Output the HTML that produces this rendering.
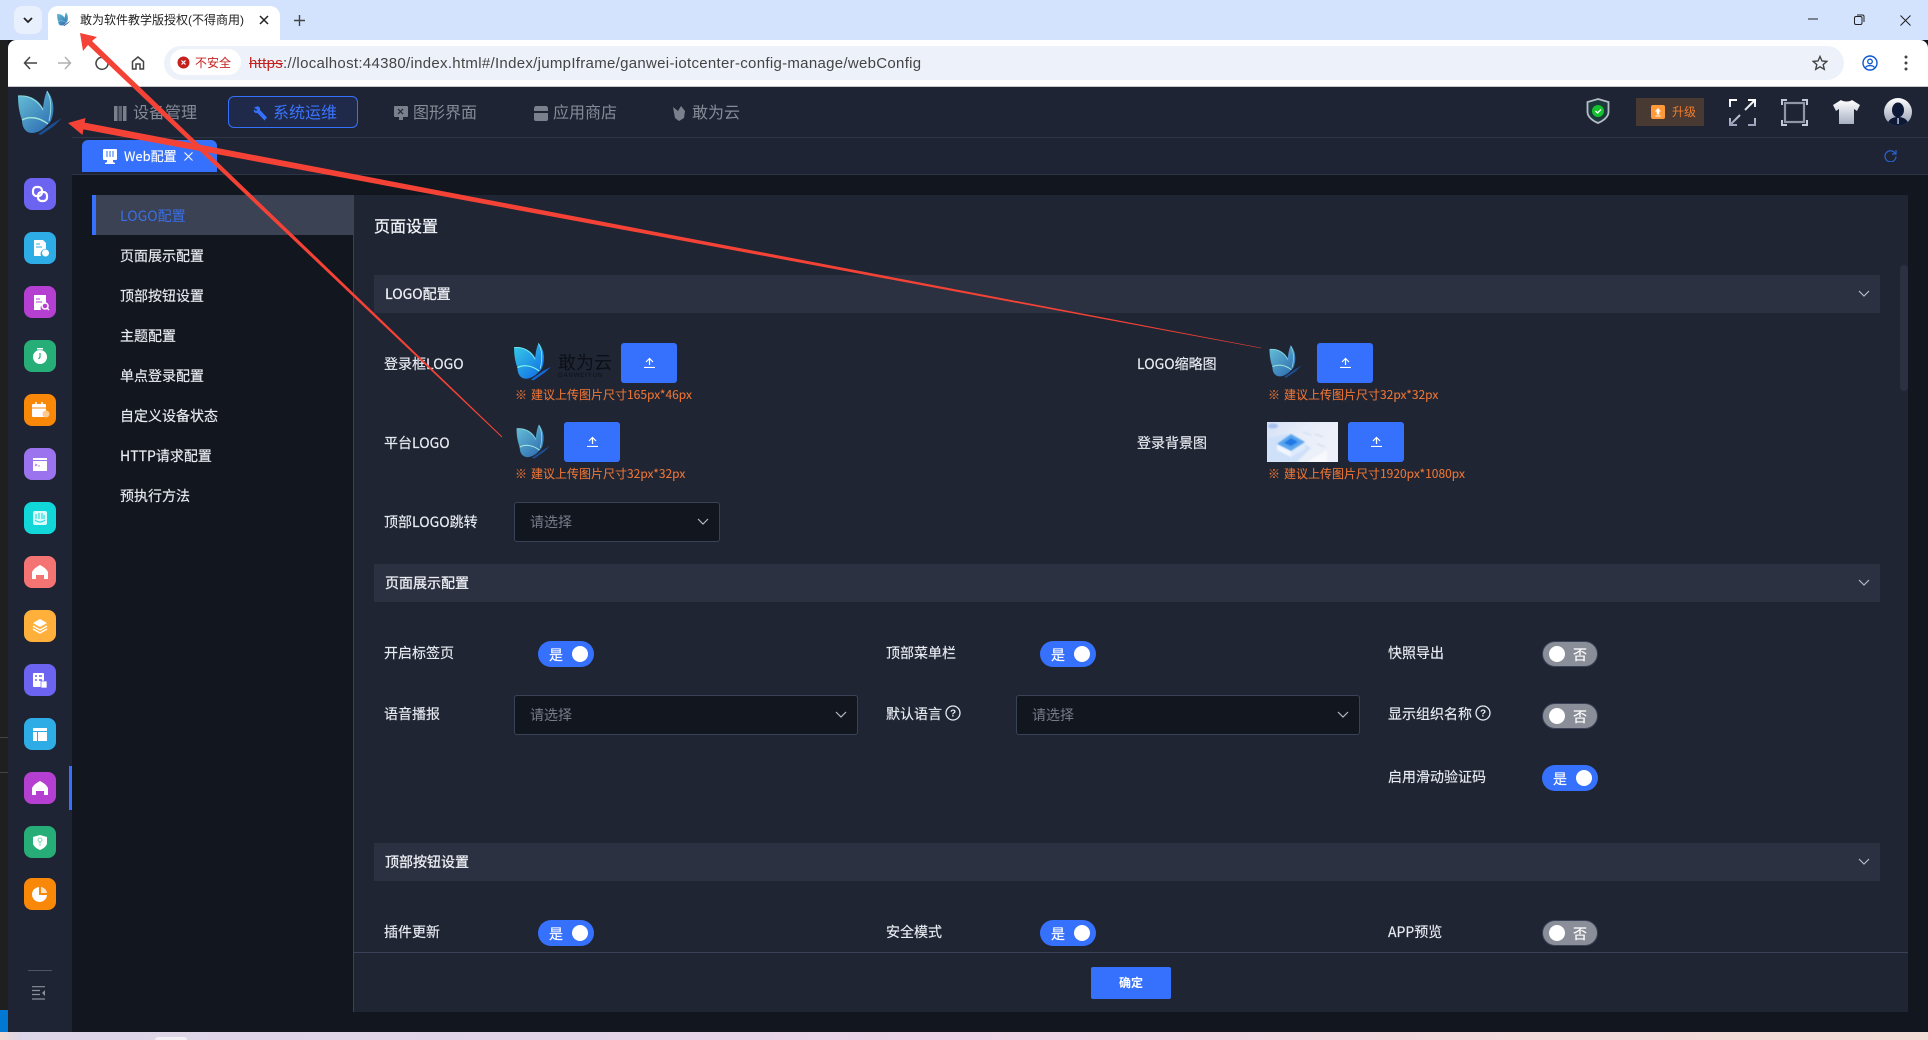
<!DOCTYPE html>
<html lang="zh"><head><meta charset="utf-8"><title>敢为软件教学版授权(不得商用)</title>
<style>
*{box-sizing:border-box}
html,body{margin:0;padding:0;width:1928px;height:1040px;overflow:hidden;background:#12161f;font-family:"Liberation Sans","Noto Sans CJK SC",sans-serif}
.a{position:absolute}
.t{position:absolute;white-space:nowrap;line-height:20px;height:20px;font-size:14px;color:#e8ebf1;-webkit-text-stroke:.15px #e8ebf1}
.n{font-family:"Noto Sans CJK SC","Liberation Sans",sans-serif}
.nav{font-size:16px;color:#858b97;-webkit-text-stroke:0}
.hint{font-size:12px;color:#ea7436;-webkit-text-stroke:.1px #ea7436}
.chrome{-webkit-text-stroke:0}
.sw{position:absolute;width:56px;height:26px;border-radius:13px;color:#fff;font-size:14px;line-height:26px}
.sw.on{background:#3671fd}
.sw.off{background:#8a8e98;border:1px solid #3a4258}
.sw i{position:absolute;top:5px;width:16px;height:16px;border-radius:50%;background:#fff}
.sw.on i{right:6px}.sw.off i{left:6px;top:4px}
.sw b{position:absolute;font-weight:400;top:1px;-webkit-text-stroke:.15px #fff}
.sw.on b{left:11px}.sw.off b{right:10px;top:0}
.sel{position:absolute;height:40px;background:#12161f;border:1px solid #3a4258;border-radius:3px;color:#767c8a;font-size:14px;line-height:38px;padding-left:15px}
.sel svg{position:absolute;right:10px;top:15px}
.sec{position:absolute;left:374px;width:1506px;background:#2b3140;color:#eceef3;font-size:14px;font-family:"Noto Sans CJK SC","Liberation Sans",sans-serif;-webkit-text-stroke:.3px #eceef3;padding-left:11px}
.sec svg{position:absolute;left:1484px;top:50%;margin-top:-4px}
.up{position:absolute;width:56px;height:40px;border-radius:3px;background:#3671fd}
.up svg{position:absolute;left:23px;top:14px}
.ic{position:absolute;left:24px;width:32px;height:32px;border-radius:8px}
.ic svg{position:absolute;left:0;top:0}
</style></head><body>

<svg width="0" height="0" style="position:absolute">
<defs>
<linearGradient id="g1" x1="0" y1="0" x2="0.8" y2="1"><stop offset="0" stop-color="#68c2d8"/><stop offset="1" stop-color="#2f6eb2"/></linearGradient>
<linearGradient id="h1" x1="0" y1="0" x2="0.8" y2="1"><stop offset="0" stop-color="#38cfe6"/><stop offset="1" stop-color="#1270e6"/></linearGradient>
<symbol id="bf" viewBox="0 0 64 52">
<path d="M6 10C16 8 26 13 31 22C32 14 33 9 35 5C41 11 43 22 40 32C39 35 38 37 36 38C32 43 26 47 20 47C14 47 10 42 10 34C7 26 6 18 6 10Z" fill="url(#g1)"/>
<path d="M6 10C16 9 26 14 31 24" fill="none" stroke="#8fdcdc" stroke-width="1"/>
<path d="M35 5C39 12 40 22 37 35" fill="none" stroke="#8fdcdc" stroke-width="1"/>
<path d="M10 34C17 30 27 31 36 38" fill="none" stroke="#a0e6dc" stroke-width="1.400"/>
<path d="M26 48L40 38L50 32L42 40L29 49Z" fill="#1c4f90"/>
</symbol>
<symbol id="bf2" viewBox="0 0 64 52">
<path d="M6 10C16 8 26 13 31 22C32 14 33 9 35 5C41 11 43 22 40 32C39 35 38 37 36 38C32 43 26 47 20 47C14 47 10 42 10 34C7 26 6 18 6 10Z" fill="url(#h1)"/>
<path d="M6 10C16 9 26 14 31 24" fill="none" stroke="#7cf0e8" stroke-width="1"/>
<path d="M35 5C39 12 40 22 37 35" fill="none" stroke="#7cf0e8" stroke-width="1"/>
<path d="M10 34C17 30 27 31 36 38" fill="none" stroke="#7cf0e8" stroke-width="1.400"/>
<path d="M26 48L40 38L50 33L42 40L29 49Z" fill="#1468d8"/>
</symbol>
<symbol id="up" viewBox="0 0 11 11"><path d="M5.5 8V1.5M2 5L5.5 1.5L9 5" fill="none" stroke="#fff" stroke-width="1.2"/><path d="M0 10.5H11" stroke="#fff" stroke-width="1.2"/></symbol>
<symbol id="ch" viewBox="0 0 12 7"><path d="M1 1L6 6L11 1" fill="none" stroke="#b4bac6" stroke-width="1.2"/></symbol>
</defs></svg>

<!-- browser chrome -->
<div class="a" style="left:0;top:0;width:1928px;height:40px;background:#d3e3fd"></div>
<div class="a" style="left:0;top:40px;width:8px;height:992px;background:#1f1f1f"></div>
<div class="a" style="left:8px;top:40px;width:1920px;height:46px;background:#fff;border-radius:8px 8px 0 0"></div>
<div class="a" style="left:8px;top:86px;width:1920px;height:1px;background:#c9c9c9"></div>
<div class="a" style="left:14px;top:6px;width:28px;height:28px;border-radius:8px;background:#e9f0fd"></div>
<svg class="a" style="left:23px;top:17px" width="10" height="7"><path d="M1 1L5 5L9 1" fill="none" stroke="#222" stroke-width="1.8"/></svg>
<div class="a" style="left:48px;top:6px;width:232px;height:36px;background:#fff;border-radius:10px 10px 0 0"></div>
<svg class="a" style="left:55px;top:11px" width="20" height="16"><use href="#bf"/></svg>
<div class="t chrome" style="left:80px;top:10px;font-size:12px;color:#1f1f1f">敢为软件教学版授权(不得商用)</div>
<svg class="a" style="left:259px;top:15px" width="10" height="10"><path d="M1 1L9 9M9 1L1 9" stroke="#222" stroke-width="1.5"/></svg>
<svg class="a" style="left:294px;top:15px" width="11" height="11"><path d="M5.5 0V11M0 5.5H11" stroke="#444" stroke-width="1.4"/></svg>
<svg class="a" style="left:1808px;top:14px" width="10" height="10"><path d="M0 5H10" stroke="#222" stroke-width="1"/></svg>
<svg class="a" style="left:1854px;top:14px" width="11" height="11"><rect x="0.5" y="2.5" width="7.5" height="8" rx="1.5" fill="none" stroke="#222"/><path d="M3 1H8.5Q10 1 10 2.500V8" fill="none" stroke="#222"/></svg>
<svg class="a" style="left:1900px;top:15px" width="11" height="11"><path d="M0.500 0.500L10.500 10.500M10.500 0.500L0.500 10.500" stroke="#222"/></svg>

<svg class="a" style="left:23px;top:55px" width="14" height="16"><path d="M7 2L1.500 8L7 14M2 8H14" fill="none" stroke="#444" stroke-width="1.500"/></svg>
<svg class="a" style="left:58px;top:55px" width="14" height="16"><path d="M7 2L12.500 8L7 14M12 8H0" fill="none" stroke="#b0b0b0" stroke-width="1.500"/></svg>
<svg class="a" style="left:95px;top:55px" width="14" height="16"><path d="M12 5A6 6 0 1 0 13 8" fill="none" stroke="#444" stroke-width="1.500"/></svg>
<svg class="a" style="left:131px;top:55px" width="14" height="16"><path d="M1.500 14V6.500L7 2L12.500 6.500V14H9V9H5V14Z" fill="none" stroke="#444" stroke-width="1.500"/></svg>

<div class="a" style="left:164px;top:46px;width:1680px;height:34px;border-radius:17px;background:#edf2fa"></div>
<div class="a" style="left:170px;top:49px;width:71px;height:26px;border-radius:13px;background:#fff"></div>
<svg class="a" style="left:177px;top:56px" width="13" height="13"><circle cx="6.500" cy="6.500" r="6" fill="#c5221f"/><path d="M4.500 4.500L8.500 8.500M8.500 4.500L4.500 8.500" stroke="#fff" stroke-width="1.200"/></svg>
<div class="t chrome" style="left:195px;top:53px;font-size:12px;color:#c5221f">不安全</div>
<div class="t chrome" style="left:249px;top:54px;font-size:15px;letter-spacing:.3px;color:#444"><span style="color:#c5221f;text-decoration:line-through">https</span>://localhost:44380/index.html#/Index/jumpIframe/ganwei-iotcenter-config-manage/webConfig</div>
<svg class="a" style="left:1812px;top:55px" width="16" height="16"><path d="M8 1.500L10 6L14.800 6.400L11.200 9.600L12.300 14.300L8 11.800L3.700 14.300L4.800 9.600L1.200 6.400L6 6Z" fill="none" stroke="#444" stroke-width="1.400"/></svg>
<svg class="a" style="left:1862px;top:55px" width="16" height="16"><circle cx="8" cy="8" r="7" fill="none" stroke="#0b57d0" stroke-width="1.400"/><circle cx="8" cy="6.500" r="2.300" fill="none" stroke="#0b57d0" stroke-width="1.300"/><path d="M3.500 12.500C5 10 11 10 12.500 12.500" fill="none" stroke="#0b57d0" stroke-width="1.300"/></svg>
<svg class="a" style="left:1904px;top:55px" width="4" height="16"><circle cx="2" cy="2" r="1.500" fill="#444"/><circle cx="2" cy="8" r="1.500" fill="#444"/><circle cx="2" cy="14" r="1.500" fill="#444"/></svg>

<!-- app shell -->
<div class="a" style="left:8px;top:87px;width:1920px;height:945px;background:#12161f"></div>
<div class="a" style="left:8px;top:87px;width:64px;height:945px;background:#1e2433"></div>
<div class="a" style="left:72px;top:87px;width:1856px;height:87px;background:#1e2433"></div>
<div class="a" style="left:72px;top:137px;width:1856px;height:1px;background:#2d3445"></div>
<div class="a" style="left:72px;top:174px;width:1856px;height:1px;background:#2d3445"></div>
<div class="a" style="left:0;top:737px;width:8px;height:1px;background:#444"></div>
<div class="a" style="left:0;top:772px;width:8px;height:1px;background:#444"></div>
<div class="a" style="left:0;top:1010px;width:8px;height:22px;background:#0078d4"></div>
<div class="a" style="left:0;top:1032px;width:1928px;height:8px;background:linear-gradient(90deg,#f3d9cf 0,#ddd6e8 1%,#e4d4e8 30%,#edd3e6 50%,#f3d9dc 75%,#f3dcd6 100%)"></div>
<div class="a" style="left:155px;top:1037px;width:32px;height:3px;background:#f3f1f6;border-radius:3px 3px 0 0"></div>

<svg class="a" style="left:12px;top:86px" width="64" height="52"><use href="#bf"/></svg>

<!-- top nav -->
<svg class="a" style="left:114px;top:106px" width="13" height="16"><rect x="0" y="0" width="3.500" height="15" fill="#7a808c"/><rect x="4.500" y="0" width="3.500" height="15" fill="#5e646f"/><rect x="9" y="0" width="3.500" height="15" fill="#7a808c"/></svg>
<div class="t nav" style="left:133px;top:104px">设备管理</div>
<div class="a" style="left:228px;top:96px;width:130px;height:32px;border:1px solid #3671fd;border-radius:6px;background:#1f2a4a"></div>
<svg class="a" style="left:253px;top:106px" width="15" height="16"><path d="M1 1.500L4 0.500C6 0 7.500 2 7 4L14 11.500L11.500 14.500L4.500 7C2.500 7.500 0 6 1 3.500L3 5L4.500 4Z" fill="#3671fd"/></svg>
<div class="t nav" style="left:273px;top:104px;color:#3a74ff">系统运维</div>
<svg class="a" style="left:394px;top:106px" width="14" height="16"><rect x="0" y="0" width="14" height="11" rx="1" fill="#7a808c"/><rect x="5" y="11" width="4" height="3" fill="#7a808c"/><path d="M4 3L9 8M9 3L4 8" stroke="#1e2433" stroke-width="1.200"/></svg>
<div class="t nav" style="left:413px;top:104px">图形界面</div>
<svg class="a" style="left:534px;top:106px" width="14" height="16"><path d="M2 0H12Q14 0 14 3V5H0V3Q0 0 2 0Z" fill="#7a808c"/><path d="M0 7H14V13Q14 15 12 15H2Q0 15 0 13Z" fill="#7a808c"/></svg>
<div class="t nav" style="left:553px;top:104px">应用商店</div>
<svg class="a" style="left:673px;top:106px" width="13" height="16"><path d="M0 1L5 5L8 0L12 5L11 12L6 15L2 12Z" fill="#7a808c"/></svg>
<div class="t nav" style="left:692px;top:104px">敢为云</div>

<!-- top right -->
<svg class="a" style="left:1586px;top:98px" width="24" height="26"><path d="M12 1L22.500 4V14C22.500 19 17 23 12 25C7 23 1.500 19 1.500 14V4Z" fill="#1c3a3c" stroke="#b6bcc8" stroke-width="1.800"/><circle cx="12" cy="13" r="6" fill="#13c22e"/><path d="M9.500 13L11.500 15L15 11.500" fill="none" stroke="#fff" stroke-width="1.300"/></svg>
<div class="a" style="left:1636px;top:98px;width:68px;height:28px;background:#483a33"></div>
<svg class="a" style="left:1651px;top:105px" width="14" height="14"><rect width="14" height="14" rx="2" fill="#ff9a3a"/><path d="M7 3L10 6.500H8.300V9.500H5.700V6.500H4Z" fill="#fff"/><rect x="4.500" y="10.500" width="5" height="1" fill="#fff"/></svg>
<div class="t chrome" style="left:1672px;top:102px;font-size:12px;color:#ef7a2c">升级</div>
<svg class="a" style="left:1729px;top:99px" width="27" height="27"><defs><linearGradient id="gi" x1="0" y1="0" x2="0" y2="1"><stop offset="0" stop-color="#fff"/><stop offset="1" stop-color="#99a2b8"/></linearGradient></defs><path d="M1 8V1H8M19 1H26V8M26 19V26H19M8 26H1V19" fill="none" stroke="url(#gi)" stroke-width="2"/><path d="M16 11L25 2M11 16L2 25" stroke="url(#gi)" stroke-width="2"/></svg>
<svg class="a" style="left:1781px;top:99px" width="27" height="27"><path d="M1 6V1H6M21 1H26V6M26 21V26H21M6 26H1V21" fill="none" stroke="#c3c9d6" stroke-width="2"/><rect x="4" y="4" width="19" height="19" fill="none" stroke="#8e96a8" stroke-width="2.200"/></svg>
<svg class="a" style="left:1833px;top:100px" width="27" height="25"><defs><linearGradient id="gs" x1="0" y1="0" x2="0" y2="1"><stop offset="0" stop-color="#fff"/><stop offset="1" stop-color="#a7afc2"/></linearGradient></defs><path d="M8 0C10 2 17 2 19 0L27 5L24 11L21 9V24H6V9L3 11L0 5Z" fill="url(#gs)"/></svg>
<svg class="a" style="left:1884px;top:98px" width="28" height="28"><defs><linearGradient id="ga" x1="0" y1="0" x2="0" y2="1"><stop offset="0" stop-color="#fff"/><stop offset="1" stop-color="#8f98ab"/></linearGradient><clipPath id="ca"><circle cx="14" cy="14" r="14"/></clipPath></defs><circle cx="14" cy="14" r="14" fill="url(#ga)"/><g clip-path="url(#ca)"><ellipse cx="14" cy="12" rx="6" ry="7.500" fill="#0d1836"/><path d="M3 28C4 21 9 19 14 19C19 19 24 21 25 28Z" fill="#0d1836"/><rect x="13.300" y="20" width="1.500" height="6" fill="#b8c0d0"/></g></svg>
<svg class="a" style="left:1884px;top:149px" width="13" height="13"><path d="M11.500 5A5.500 5.500 0 1 0 12 7.500" fill="none" stroke="#2b62d0" stroke-width="1.200"/><path d="M12 1V5H8" fill="none" stroke="#2b62d0" stroke-width="1.200"/></svg>

<!-- tab -->
<div class="a" style="left:82px;top:140px;width:135px;height:32px;background:#3671fd;border-radius:6px 6px 0 0"></div>
<svg class="a" style="left:103px;top:149px" width="14" height="15"><path d="M0 1Q0 0 1 0H13Q14 0 14 1V10Q14 11 13 11H10V13L12 14V15H2V14L4 13V11H1Q0 11 0 10Z" fill="#fff"/><path d="M4 2V8M7 2V8M10 2V8" stroke="#3671fd" stroke-width="1"/></svg>
<div class="t n" style="left:124px;top:146px;font-size:13px;color:#fff">Web配置</div>
<svg class="a" style="left:184px;top:152px" width="9" height="9"><path d="M0.500 0.500L8.500 8.500M8.500 0.500L0.500 8.500" stroke="#fff"/></svg>

<!-- sidebar -->
<div class="ic" style="top:178px;background:#6c63f0"><svg width="32" height="32"><rect x="9" y="9" width="9" height="9" rx="3.500" fill="none" stroke="#fff" stroke-width="2.200"/><rect x="14" y="14" width="9" height="9" rx="3.500" fill="none" stroke="#fff" stroke-width="2.200"/></svg></div>
<div class="ic" style="top:232px;background:#2dace6"><svg width="32" height="32"><path d="M10 8H19L22 11V17A5 5 0 0 0 17 24H10Z" fill="#fff"/><circle cx="21.500" cy="21" r="3.500" fill="#fff"/><path d="M12 12H16M12 15H18" stroke="#2dace6"/></svg></div>
<div class="ic" style="top:286px;background:#b53fd0"><svg width="32" height="32"><path d="M10 9H22V17A5 5 0 0 0 17 24H10Z" fill="#fff"/><circle cx="21" cy="20" r="3" fill="none" stroke="#fff" stroke-width="1.500"/><path d="M23 22L25 24" stroke="#fff" stroke-width="1.500"/><path d="M12 13H16M12 16H18" stroke="#b53fd0"/></svg></div>
<div class="ic" style="top:340px;background:#27ae78"><svg width="32" height="32"><circle cx="16" cy="17" r="7" fill="#fff"/><rect x="13" y="8" width="6" height="1.500" fill="#fff"/><path d="M16 13V17L14.500 19" fill="none" stroke="#27ae78" stroke-width="1.200"/></svg></div>
<div class="ic" style="top:394px;background:#f98708"><svg width="32" height="32"><rect x="8" y="10" width="14" height="13" rx="1" fill="#fff"/><path d="M12 8V11M18 8V11" stroke="#fff" stroke-width="1.500"/><path d="M8 14H22" stroke="#f98708"/><circle cx="22" cy="20" r="3.500" fill="#fdc98c"/></svg></div>
<div class="ic" style="top:448px;background:#9c73ee"><svg width="32" height="32"><rect x="9" y="10" width="14" height="13" fill="#fff"/><path d="M9 12.500H23" stroke="#9c73ee"/><path d="M11 16L13 17L11 18M14 18H16" stroke="#9c73ee" stroke-width=".8" fill="none"/></svg></div>
<div class="ic" style="top:502px;background:#11d7d9"><svg width="32" height="32"><rect x="9" y="9" width="14" height="14" rx="2" fill="#d8fbfb"/><path d="M11 18Q16 22 21 18M12 12V17M15 11V17M18 11V17M20 13V17" stroke="#11d7d9" fill="none"/></svg></div>
<div class="ic" style="top:556px;background:#f47373"><svg width="32" height="32"><path d="M8 23V16Q10 12 16 9Q22 12 24 16V23H20V19H12V23Z" fill="#fff"/></svg></div>
<div class="ic" style="top:610px;background:#ffb03a"><svg width="32" height="32"><path d="M16 9L23 13L16 17L9 13Z" fill="#fff"/><path d="M9 16L16 20L23 16M9 19L16 23L23 19" fill="none" stroke="#fff" stroke-width="1.300"/></svg></div>
<div class="ic" style="top:664px;background:#6c63f0"><svg width="32" height="32"><rect x="9" y="9" width="11" height="14" rx="1" fill="#fff"/><path d="M11 12H13M15 12H18M11 16H13M15 16H18" stroke="#6c63f0" stroke-width="1.400"/><rect x="17" y="17" width="6" height="7" fill="#fff" stroke="#6c63f0" stroke-width=".7"/></svg></div>
<div class="ic" style="top:718px;background:#2dace6"><svg width="32" height="32"><rect x="9" y="10" width="14" height="3" fill="#fff"/><rect x="9" y="14" width="4" height="9" fill="#fff"/><rect x="14" y="14" width="9" height="9" fill="#fff"/></svg></div>
<div class="ic" style="top:772px;background:#b53fd0"><svg width="32" height="32"><path d="M8 23V16Q10 12 16 9Q22 12 24 16V23H20V19H12V23Z" fill="#fff"/></svg></div>
<div class="a" style="left:69px;top:766px;width:3px;height:44px;background:#3671fd"></div>
<div class="ic" style="top:826px;background:#27ae78"><svg width="32" height="32"><path d="M16 9L23 11V17C23 20 19 23 16 24C13 23 9 20 9 17V11Z" fill="#fff"/><circle cx="16" cy="14" r="2" fill="none" stroke="#8fe0c0" stroke-width="1.200"/><path d="M16 16V20" stroke="#8fe0c0" stroke-width="1.200"/></svg></div>
<div class="ic" style="top:878px;background:#f98708"><svg width="32" height="32"><path d="M15 9V17H23A7.500 7.500 0 1 1 15 9Z" fill="#fff"/><path d="M17 9A7 7 0 0 1 23 15H17Z" fill="#fde3c5"/></svg></div>
<div class="a" style="left:28px;top:970px;width:24px;height:1px;background:#4d5464"></div>
<svg class="a" style="left:32px;top:986px" width="14" height="14"><path d="M0 .7H13M0 4.500H8M0 8.500H8M0 13H13" stroke="#8a909c" stroke-width="1.200"/><path d="M13 4V10L10 7Z" fill="#8a909c"/></svg>

<!-- left menu -->
<div class="a" style="left:92px;top:195px;width:261px;height:40px;background:#3b4254"></div>
<div class="a" style="left:92px;top:195px;width:4px;height:40px;background:#3671fd"></div>
<div class="t n" style="left:120px;top:206px;color:#3a6fe8;-webkit-text-stroke:0">LOGO配置</div>
<div class="t" style="left:120px;top:246px">页面展示配置</div>
<div class="t" style="left:120px;top:286px">顶部按钮设置</div>
<div class="t" style="left:120px;top:326px">主题配置</div>
<div class="t" style="left:120px;top:366px">单点登录配置</div>
<div class="t" style="left:120px;top:406px">自定义设备状态</div>
<div class="t n" style="left:120px;top:446px">HTTP请求配置</div>
<div class="t" style="left:120px;top:486px">预执行方法</div>

<!-- panel -->
<div class="a" style="left:353px;top:195px;width:1555px;height:817px;background:#1f2533;border-left:1px solid #3a4258"></div>
<div class="a" style="left:1900px;top:265px;width:8px;height:126px;background:#2b3140;border-radius:4px"></div>
<div class="a" style="left:354px;top:952px;width:1554px;height:1px;background:#3a4258"></div>
<div class="t" style="left:374px;top:218px;font-size:16px;color:#f0f2f6;-webkit-text-stroke:.3px #f0f2f6">页面设置</div>

<div class="sec" style="top:275px;height:38px;line-height:38px">LOGO配置<svg width="12" height="7"><use href="#ch"/></svg></div>
<div class="sec" style="top:564px;height:38px;line-height:39px">页面展示配置<svg width="12" height="7"><use href="#ch"/></svg></div>
<div class="sec" style="top:843px;height:38px;line-height:38px">顶部按钮设置<svg width="12" height="7"><use href="#ch"/></svg></div>

<!-- logo section -->
<div class="t n" style="left:384px;top:354px">登录框LOGO</div>
<svg class="a" style="left:509px;top:339px" width="54" height="44"><use href="#bf2"/></svg>
<div class="t chrome" style="left:558px;top:351px;height:24px;line-height:24px;font-size:18px;color:#0c0f16">敢为云</div>
<div class="t chrome" style="left:558px;top:372px;height:8px;line-height:8px;font-size:6px;color:#0c0f16;letter-spacing:.9px">GANWEIYUN</div>
<div class="up" style="left:621px;top:343px"><svg width="11" height="11"><use href="#up"/></svg></div>
<div class="t hint" style="left:515px;top:385px">※</div><div class="t hint n" style="left:531px;top:385px">建议上传图片尺寸165px*46px</div>

<div class="t n" style="left:384px;top:433px">平台LOGO</div>
<svg class="a" style="left:512px;top:421px" width="49" height="40"><use href="#bf"/></svg>
<div class="up" style="left:564px;top:422px"><svg width="11" height="11"><use href="#up"/></svg></div>
<div class="t hint" style="left:515px;top:464px">※</div><div class="t hint n" style="left:531px;top:464px">建议上传图片尺寸32px*32px</div>

<div class="t n" style="left:384px;top:512px">顶部LOGO跳转</div>
<div class="sel" style="left:514px;top:502px;width:206px">请选择<svg width="12" height="7"><use href="#ch"/></svg></div>

<div class="t n" style="left:1137px;top:354px">LOGO缩略图</div>
<svg class="a" style="left:1265px;top:342px" width="47" height="38"><use href="#bf"/></svg>
<div class="up" style="left:1317px;top:343px"><svg width="11" height="11"><use href="#up"/></svg></div>
<div class="t hint" style="left:1268px;top:385px">※</div><div class="t hint n" style="left:1284px;top:385px">建议上传图片尺寸32px*32px</div>

<div class="t" style="left:1137px;top:433px">登录背景图</div>
<svg class="a" style="left:1267px;top:422px" width="71" height="40"><defs><linearGradient id="bgl" x1="0" y1="0" x2="1" y2=".6"><stop offset="0" stop-color="#d5e0f6"/><stop offset=".5" stop-color="#e8eef9"/><stop offset="1" stop-color="#eef1f9"/></linearGradient></defs><rect width="71" height="40" fill="url(#bgl)"/><g style="filter:blur(.7px)"><path d="M0 16L20 12L44 26L30 40H0Z" fill="#cfe0f9"/><path d="M10 22L24 12L38 20L24 29Z" fill="#5aa4ee"/><path d="M17 21L24 16L31 20L24 24Z" fill="#1f78e6"/><path d="M10 22L24 29V35L10 28Z" fill="#f1f6fe"/><path d="M38 20L24 29V35L38 27Z" fill="#dfeafb"/><ellipse cx="6" cy="4" rx="5" ry="2.500" fill="#a5bfee"/><path d="M40 40L60 28V40Z" fill="#f7f9fd"/><path d="M36 10L44 13M48 12L56 15M50 22L58 25" stroke="#c8d4ea" stroke-width=".8"/></g></svg>
<div class="up" style="left:1348px;top:422px"><svg width="11" height="11"><use href="#up"/></svg></div>
<div class="t hint" style="left:1268px;top:464px">※</div><div class="t hint n" style="left:1284px;top:464px">建议上传图片尺寸1920px*1080px</div>

<!-- page display section -->
<div class="t" style="left:384px;top:643px">开启标签页</div>
<div class="sw on" style="left:538px;top:641px"><b>是</b><i></i></div>
<div class="t" style="left:886px;top:643px">顶部菜单栏</div>
<div class="sw on" style="left:1040px;top:641px"><b>是</b><i></i></div>
<div class="t" style="left:1388px;top:643px">快照导出</div>
<div class="sw off" style="left:1542px;top:641px"><i></i><b>否</b></div>

<div class="t" style="left:384px;top:704px">语音播报</div>
<div class="sel" style="left:514px;top:695px;width:344px">请选择<svg width="12" height="7"><use href="#ch"/></svg></div>
<div class="t" style="left:886px;top:704px">默认语言</div>
<svg class="a" style="left:945px;top:705px" width="16" height="16"><circle cx="8" cy="8" r="7" fill="none" stroke="#e8ebf1" stroke-width="1.300"/><text x="8" y="11.500" text-anchor="middle" font-size="10" font-weight="700" fill="#e8ebf1" font-family="Liberation Sans, sans-serif">?</text></svg>
<div class="sel" style="left:1016px;top:695px;width:344px">请选择<svg width="12" height="7"><use href="#ch"/></svg></div>
<div class="t" style="left:1388px;top:704px">显示组织名称</div>
<svg class="a" style="left:1475px;top:705px" width="16" height="16"><circle cx="8" cy="8" r="7" fill="none" stroke="#e8ebf1" stroke-width="1.300"/><text x="8" y="11.500" text-anchor="middle" font-size="10" font-weight="700" fill="#e8ebf1" font-family="Liberation Sans, sans-serif">?</text></svg>
<div class="sw off" style="left:1542px;top:703px"><i></i><b>否</b></div>
<div class="t" style="left:1388px;top:767px">启用滑动验证码</div>
<div class="sw on" style="left:1542px;top:765px"><b>是</b><i></i></div>

<!-- top button section -->
<div class="t" style="left:384px;top:922px">插件更新</div>
<div class="sw on" style="left:538px;top:920px"><b>是</b><i></i></div>
<div class="t" style="left:886px;top:922px">安全模式</div>
<div class="sw on" style="left:1040px;top:920px"><b>是</b><i></i></div>
<div class="t n" style="left:1388px;top:922px">APP预览</div>
<div class="sw off" style="left:1542px;top:920px"><i></i><b>否</b></div>

<div class="a" style="left:1091px;top:967px;width:80px;height:32px;border-radius:2px;background:#3671fd;color:#fff;font-size:12px;font-weight:700;text-align:center;line-height:32px">确定</div>

<!-- red annotation arrows -->
<svg class="a" style="left:0;top:0;pointer-events:none" width="1928" height="1040">
<polygon points="80,33 97,37 92,41 502.300,436.600 501.700,437.400 88,45 83,51" fill="#f44336"/>
<polygon points="68,123 85.500,118 84.600,122.600 1261,347.800 1261,348.300 83.400,129.400 82.500,135" fill="#f44336"/>
</svg>
</body></html>
